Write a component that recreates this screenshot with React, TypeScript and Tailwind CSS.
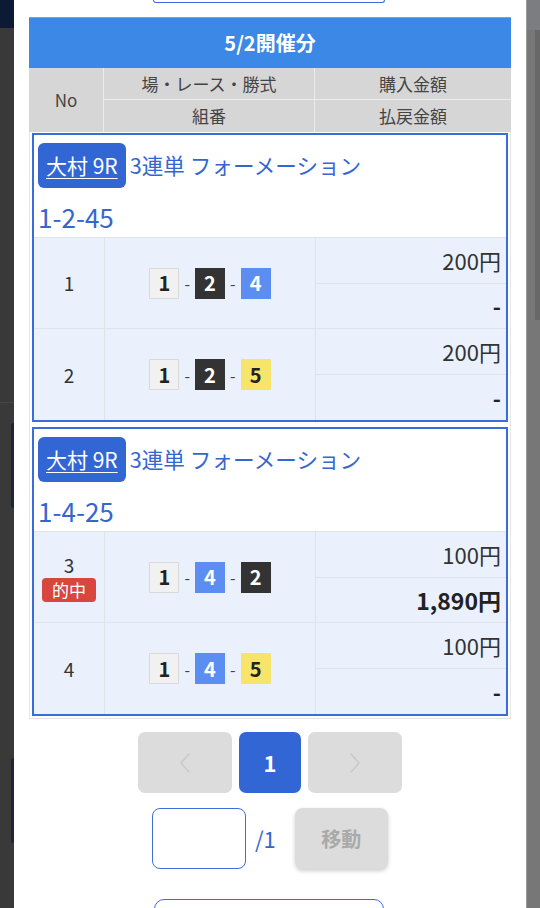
import React from 'react';

interface Bet {
  no: number;
  boats: number[];
  amount: string;
  payout: string;
  hit?: boolean;
}

interface Ticket {
  venue: string;
  kind: string;
  combo: string;
  bets: Bet[];
}

const TICKETS: Ticket[] = [
  {
    venue: '大村 9R',
    kind: '3連単 フォーメーション',
    combo: '1-2-45',
    bets: [
      { no: 1, boats: [1, 2, 4], amount: '200円', payout: '-' },
      { no: 2, boats: [1, 2, 5], amount: '200円', payout: '-' },
    ],
  },
  {
    venue: '大村 9R',
    kind: '3連単 フォーメーション',
    combo: '1-4-25',
    bets: [
      { no: 3, boats: [1, 4, 2], amount: '100円', payout: '1,890円', hit: true },
      { no: 4, boats: [1, 4, 5], amount: '100円', payout: '-' },
    ],
  },
];

const BOAT_STYLE: Record<number, string> = {
  1: 'bg-[#f1f1f1] border border-[#d9d9d9] text-[#222]',
  2: 'bg-[#333333] text-white',
  3: 'bg-[#e2453c] text-white',
  4: 'bg-[#5b8ef0] text-white',
  5: 'bg-[#f6e46b] text-[#222]',
  6: 'bg-[#3aa35a] text-white',
};

function Boat({ n }: { n: number }) {
  return (
    <span
      className={`w-[30px] h-[31px] flex items-center justify-center text-[20px] font-bold leading-none ${BOAT_STYLE[n]}`}
    >
      {n}
    </span>
  );
}

function BetRow({ bet, last }: { bet: Bet; last: boolean }) {
  return (
    <div
      className={`grid grid-cols-[71px_211px_1fr] h-[91px] bg-[#eaf1fd] ${last ? '' : 'border-b border-[#dfe3ea]'}`}
    >
      <div className="flex flex-col items-center justify-center border-r border-[#dfe3ea] text-[#333]">
        <span className="text-[19px] leading-[24px]">{bet.no}</span>
        {bet.hit && (
          <span className="mt-[1px] w-[54px] h-[24px] rounded-[4px] bg-[#d8463e] text-white text-[17px] leading-[24px] text-center">
            的中
          </span>
        )}
      </div>
      <div className="flex items-center justify-center border-r border-[#dfe3ea]">
        {bet.boats.map((b, i) => (
          <React.Fragment key={i}>
            {i > 0 && <span className="mx-[5px] text-[16px] text-[#444]">-</span>}
            <Boat n={b} />
          </React.Fragment>
        ))}
      </div>
      <div className="flex flex-col">
        <div className="flex-1 flex items-center justify-end pr-[5px] border-b border-[#dfe3ea] text-[22px] text-[#333]">
          {bet.amount}
        </div>
        <div
          className={`flex-1 flex items-center justify-end pr-[5px] text-[#222] font-bold ${
            bet.payout === '-' ? 'text-[22px]' : 'text-[23px]'
          }`}
        >
          {bet.payout}
        </div>
      </div>
    </div>
  );
}

function TicketCard({ ticket }: { ticket: Ticket }) {
  return (
    <div className="mx-[2px] border-2 border-[#3a6ddb] bg-white">
      <div className="h-[103px] px-[4px] pt-[8px] border-b border-[#dfe3ea]">
        <div className="flex items-center">
          <span className="h-[45px] px-[8px] flex items-center rounded-[6px] bg-[#3366d5] text-white text-[21px] underline underline-offset-[4px] decoration-1">
            {ticket.venue}
          </span>
          <span className="ml-[4px] text-[21.6px] text-[#3566cf]">{ticket.kind}</span>
        </div>
        <div className="mt-[9px] text-[26px] leading-[40px] text-[#3566cf]">{ticket.combo}</div>
      </div>
      {ticket.bets.map((bet, i) => (
        <BetRow key={bet.no} bet={bet} last={i === ticket.bets.length - 1} />
      ))}
    </div>
  );
}

function Chevron({ dir }: { dir: 'left' | 'right' }) {
  return (
    <svg width="12" height="24" viewBox="0 0 12 24" fill="none">
      <polyline
        points={dir === 'left' ? '10,3 2,12 10,21' : '2,3 10,12 2,21'}
        stroke="#c9c9c9"
        strokeWidth="1.5"
        strokeLinejoin="round"
        strokeLinecap="round"
      />
    </svg>
  );
}

export default function App() {
  return (
    <div className="h-[908px] overflow-hidden flex font-['Noto_Sans_CJK_JP','Noto_Sans',sans-serif]">
      {/* dimmed page behind modal, left */}
      <div className="w-[14px] flex flex-col bg-[#393939]">
        <div className="h-[28px] bg-[#0c1a36]" />
        <div className="h-[374px]" />
        <div className="h-px bg-[#444]" />
        <div className="ml-[11px] mt-[20px] w-[3px] h-[85px] rounded-l-md bg-[#1c2538]" />
        <div className="ml-[11px] mt-[250px] w-[3px] h-[85px] rounded-l-md bg-[#1c2538]" />
      </div>

      {/* modal */}
      <div className="w-[512px] bg-white flex flex-col">
        <div className="flex justify-center">
          <div className="ml-[-2px] w-[232px] h-[3px] border-x border-b border-[#3a6ddb] rounded-b-[6px]" />
        </div>

        <div className="mt-[14px] mx-[15px] border-b border-[#e2e2e2]">
          <div className="h-[51px] bg-[#3b88e6] flex items-center justify-center text-white text-[20px] font-bold border-t border-[#6aa6ef]">
            5/2開催分
          </div>
          <div className="grid grid-cols-[75px_211px_1fr] grid-rows-[32px_32px] bg-[#d6d6d6] text-[#444] text-[17px]">
            <div className="row-span-2 flex items-center justify-center border-r border-[#ececec]">No</div>
            <div className="flex items-center justify-center border-r border-b border-[#ececec]">
              場・レース・勝式
            </div>
            <div className="flex items-center justify-center border-b border-[#ececec]">購入金額</div>
            <div className="flex items-center justify-center border-r border-[#ececec]">組番</div>
            <div className="flex items-center justify-center">払戻金額</div>
          </div>
          <div className="flex flex-col gap-[5px] pt-[1px] pb-[2px] border-x border-[#e6e6e6]">
            {TICKETS.map((t, i) => (
              <TicketCard key={i} ticket={t} />
            ))}
          </div>
        </div>

        <div className="mt-[13px] flex justify-center gap-[7px]">
          <div className="w-[94px] h-[61px] rounded-[7px] bg-[#dcdcdc] flex items-center justify-center">
            <Chevron dir="left" />
          </div>
          <div className="w-[62px] h-[61px] rounded-[7px] bg-[#3366d5] flex items-center justify-center text-white text-[22px] font-bold">
            1
          </div>
          <div className="w-[94px] h-[61px] rounded-[7px] bg-[#dcdcdc] flex items-center justify-center">
            <Chevron dir="right" />
          </div>
        </div>

        <div className="mt-[15px] flex items-center">
          <input
            type="text"
            className="ml-[138px] w-[94px] h-[61px] rounded-[8px] border border-[#3f6fd6] bg-white outline-none"
          />
          <span className="ml-[9px] text-[22px] text-[#3566cf]">/1</span>
          <button className="ml-[19px] w-[93px] h-[61px] rounded-[8px] bg-[#dcdcdc] shadow-[0_2px_4px_rgba(0,0,0,0.2)] text-[#a9a9a9] text-[20px] font-bold">
            移動
          </button>
        </div>

        <div className="mt-[30px] flex justify-center">
          <div className="w-[230px] h-[50px] shrink-0 border border-[#3a6ddb] rounded-[10px] ml-[-2px]" />
        </div>
      </div>

      {/* dimmed page behind modal, right */}
      <div className="w-[14px] flex bg-[#777777] border-l border-[#9a9a9a]">
        <div className="flex-1 flex flex-col">
          <div className="h-[30px] bg-[#7c7d80]" />
        </div>
        <div className="w-[5px] flex flex-col">
          <div className="h-[30px] bg-[#7c7d80]" />
          <div className="h-[290px] bg-[#686868]" />
        </div>
      </div>
    </div>
  );
}
